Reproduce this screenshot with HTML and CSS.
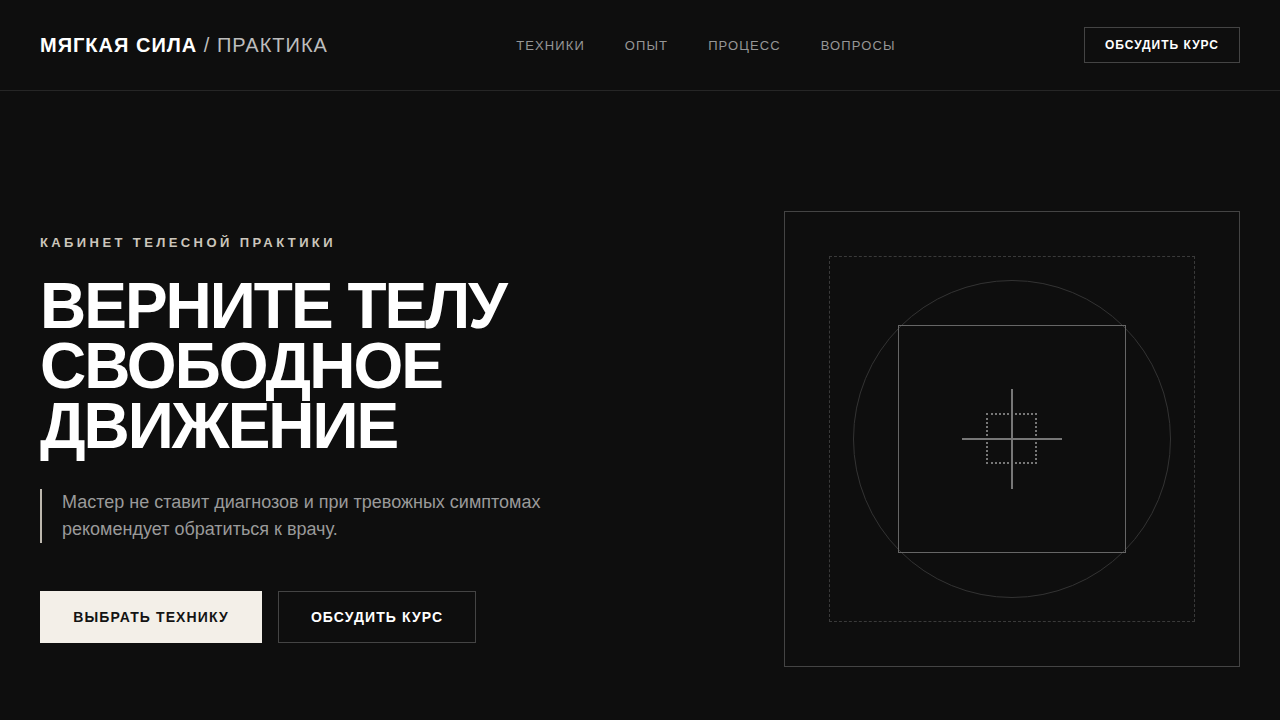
FILE: index.html
```html
<!DOCTYPE html>
<html lang="ru">
<head>
<meta charset="utf-8">
<title>Мягкая сила / Практика</title>
<link rel="stylesheet" href="styles.css">
</head>
<body>
<header class="header">
  <a class="logo" href="#"><strong>МЯГКАЯ СИЛА</strong> <span class="logo-sub">/ ПРАКТИКА</span></a>
  <nav class="nav">
    <a href="#">ТЕХНИКИ</a>
    <a href="#">ОПЫТ</a>
    <a href="#">ПРОЦЕСС</a>
    <a href="#">ВОПРОСЫ</a>
  </nav>
  <a class="btn-head" href="#">ОБСУДИТЬ КУРС</a>
</header>
<main class="hero">
  <div class="hero-text">
    <p class="eyebrow">КАБИНЕТ ТЕЛЕСНОЙ ПРАКТИКИ</p>
    <h1 class="title">ВЕРНИТЕ ТЕЛУ<br>СВОБОДНОЕ<br>ДВИЖЕНИЕ</h1>
    <p class="note">Мастер не ставит диагнозов и при тревожных симптомах рекомендует обратиться к врачу.</p>
    <div class="actions">
      <a class="btn btn-primary" href="#">ВЫБРАТЬ ТЕХНИКУ</a>
      <a class="btn btn-outline" href="#">ОБСУДИТЬ КУРС</a>
    </div>
  </div>
  <div class="frame">
    <div class="f-dashed"></div>
    <div class="f-circle"></div>
    <div class="f-square"></div>
    <div class="f-dot"></div>
    <div class="f-h"></div>
    <div class="f-v"></div>
  </div>
</main>
</body>
</html>
```

FILE: styles.css
```css
* { box-sizing: border-box; }
html, body { margin: 0; padding: 0; }
body {
  background: #0e0e0e;
  color: #fff;
  font-family: "Liberation Sans", Arial, sans-serif;
  min-height: 720px;
}
a { color: inherit; text-decoration: none; }

.header {
  height: 91px;
  padding: 0 40px;
  display: flex;
  align-items: center;
  justify-content: space-between;
  border-bottom: 1px solid #262626;
}
.logo {
  font-size: 20px;
  letter-spacing: 1px;
  color: #fff;
  white-space: nowrap;
}
.logo strong { font-weight: 700; }
.logo-sub { color: #bdbdbd; font-weight: 400; }

.nav {
  display: flex;
  gap: 40px;
}
.nav a {
  font-size: 13px;
  letter-spacing: 1.1px;
  color: #969696;
  white-space: nowrap;
}
.btn-head {
  display: flex;
  align-items: center;
  height: 36px;
  padding: 0 20px;
  border: 1px solid #444;
  font-size: 12px;
  font-weight: 700;
  letter-spacing: 1px;
  color: #fff;
  white-space: nowrap;
}

.hero {
  padding: 120px 40px 0;
  display: grid;
  grid-template-columns: 1fr 456px;
  align-items: center;
}
.eyebrow {
  margin: 0;
  font-size: 13px;
  line-height: 16px;
  font-weight: 700;
  letter-spacing: 3.4px;
  color: #cbc6bc;
}
.title {
  margin: 25px 0 0;
  font-size: 64px;
  line-height: 60px;
  font-weight: 700;
  letter-spacing: -2px;
  color: #fff;
}
.note {
  margin: 33px 0 0;
  max-width: 520px;
  padding-left: 20px;
  border-left: 2px solid #bdb8ae;
  font-size: 18px;
  line-height: 27px;
  color: #9a9a9a;
}
.actions {
  margin-top: 48px;
  display: flex;
  gap: 16px;
}
.btn {
  display: flex;
  align-items: center;
  justify-content: center;
  height: 52px;
  padding: 0;
  font-size: 14px;
  font-weight: 700;
  letter-spacing: 1.1px;
  white-space: nowrap;
}
.btn-primary {
  background: #f3efe8;
  color: #141414;
  width: 222px;
}
.btn-outline {
  border: 1px solid #444;
  color: #fff;
  width: 198px;
}

.frame {
  position: relative;
  width: 456px;
  height: 456px;
  border: 1px solid #444;
}
.f-dashed {
  position: absolute;
  inset: 44px;
  border: 1px dashed #3a3a3a;
}
.f-circle {
  position: absolute;
  inset: 68px;
  border: 1px solid #333;
  border-radius: 50%;
}
.f-square {
  position: absolute;
  inset: 113px;
  border: 1px solid #666;
}
.f-dot {
  position: absolute;
  left: 50%;
  top: 50%;
  width: 51px;
  height: 51px;
  margin: -26px 0 0 -26px;
  border: 2px dotted #777;
}
.f-h {
  position: absolute;
  left: 50%;
  top: 50%;
  width: 100px;
  height: 2px;
  margin: -1px 0 0 -50px;
  background: #777;
}
.f-v {
  position: absolute;
  left: 50%;
  top: 50%;
  width: 2px;
  height: 100px;
  margin: -50px 0 0 -1px;
  background: #777;
}
```
